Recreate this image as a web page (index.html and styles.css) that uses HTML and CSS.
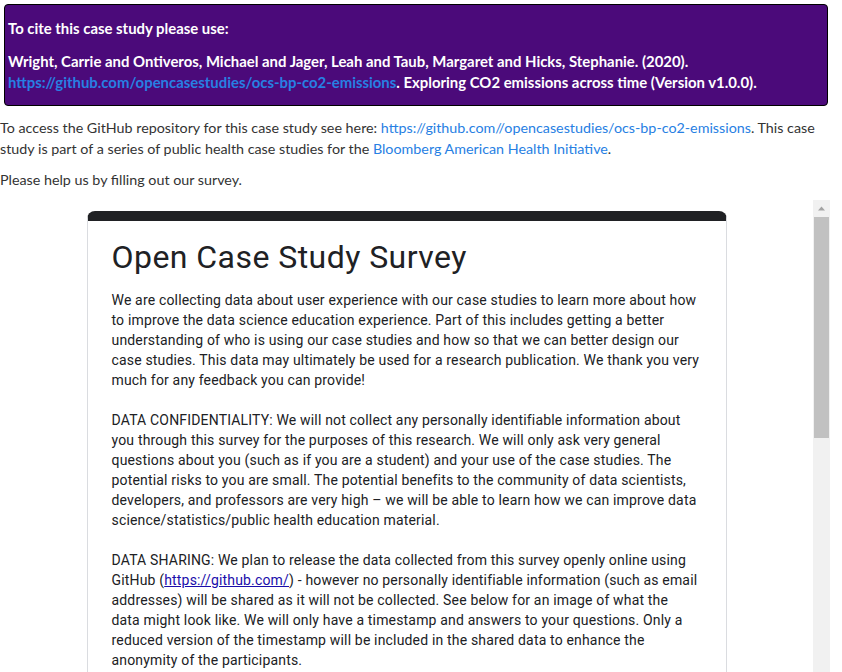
FILE: index.html
```html
<!DOCTYPE html>
<html>
<head>
<meta charset="utf-8">
<link rel="stylesheet" href="styles.css">
</head>
<body>
<div class="page">
  <div class="cite">
    <p class="cite-title">To cite this case study please use:</p>
    <p class="cite-ref">Wright, Carrie and Ontiveros, Michael and Jager, Leah and Taub, Margaret and Hicks, Stephanie. (2020). <a href="#">https://github.com/opencasestudies/ocs-bp-co2-emissions</a>. Exploring CO2 emissions across time (Version v1.0.0).</p>
  </div>
  <p class="text">To access the GitHub repository for this case study see here: <a href="#">https://github.com//opencasestudies/ocs-bp-co2-emissions</a>. This case study is part of a series of public health case studies for the <a href="#">Bloomberg American Health Initiative</a>.</p>
  <p class="text">Please help us by filling out our survey.</p>
  <div class="frame">
    <div class="frame-content">
      <div class="card">
        <h1 class="card-title">Open Case Study Survey</h1>
        <div class="card-desc">
          <p>We are collecting data about user experience with our case studies to learn more about how to improve the data science education experience. Part of this includes getting a better understanding of who is using our case studies and how so that we can better design our case studies. This data may ultimately be used for a research publication. We thank you very much for any feedback you can provide!</p>
          <p>DATA CONFIDENTIALITY: We will not collect any personally identifiable information about you through this survey for the purposes of this research. We will only ask very general questions about you (such as if you are a student) and your use of the case studies. The potential risks to you are small. The potential benefits to the community of data scientists, developers, and professors are very high – we will be able to learn how we can improve data science/statistics/public health education material.</p>
          <p>DATA SHARING: We plan to release the data collected from this survey openly online using GitHub (<a href="#">https://github.com/</a>) - however no personally identifiable information (such as email addresses) will be shared as it will not be collected. See below for an image of what the<br>data might look like. We will only have a timestamp and answers to your questions. Only a reduced version of the timestamp will be included in the shared data to enhance the anonymity of the participants.</p>
        </div>
      </div>
    </div>
    <div class="scrollbar">
      <div class="sb-up"><svg width="17" height="17" viewBox="0 0 17 17"><path d="M5 10.5 L8.5 6.5 L12 10.5 Z" fill="#a3a3a3"/></svg></div>
      <div class="sb-thumb"></div>
    </div>
  </div>
</div>
</body>
</html>
```

FILE: styles.css
```css
html, body {
  margin: 0;
  padding: 0;
  background: #fff;
  overflow: hidden;
}
.page {
  width: 832px;
  font-family: "Lato", "Open Sans", sans-serif;
  font-size: 14.3px;
  color: #333;
}
.cite {
  margin: 4px 4px 11px 4px;
  background: #4b0a7a;
  border: 1px solid #000;
  border-radius: 4px;
  padding: 13px 4px 12px 3px;
  color: #fff;
  font-weight: 700;
  font-size: 14.9px;
  line-height: 21px;
}
.cite p {
  margin: 0;
}
.cite-ref {
  margin-top: 12px !important;
}
.cite a {
  color: #2780e3;
  text-decoration: none;
}
.text {
  margin: 0 0 10px 0;
  line-height: 21px;
}
.text a {
  color: #2780e3;
  text-decoration: none;
}
.frame {
  width: 830px;
  height: 480px;
  display: flex;
  overflow: hidden;
}
.frame-content {
  flex: 1;
  display: flex;
  justify-content: center;
  align-items: flex-start;
  padding-top: 11px;
  background: #fff;
}
.card {
  width: 590px;
  border: 1px solid #dadce0;
  border-top: 10px solid #202124;
  border-radius: 8px;
  padding: 13px 24px 24px 24px;
  font-family: Roboto, "Open Sans", sans-serif;
  color: #202124;
  background: #fff;
}
.card-title {
  margin: 0;
  font-weight: 400;
  font-size: 32px;
  line-height: 46px;
  letter-spacing: 0.45px;
}
.card-desc {
  margin-top: 10px;
  font-size: 14px;
  line-height: 20px;
  letter-spacing: 0.17px;
}
.card-desc p {
  margin: 0 0 20px 0;
}
.card-desc a {
  color: #1a0dab;
  text-decoration: underline;
}
.scrollbar {
  width: 17px;
  background: #f1f1f1;
  display: flex;
  flex-direction: column;
}
.sb-up {
  height: 17px;
  display: flex;
}
.sb-thumb {
  margin: 0 1px 0 1px;
  height: 221px;
  background: #c1c1c1;
}
```
